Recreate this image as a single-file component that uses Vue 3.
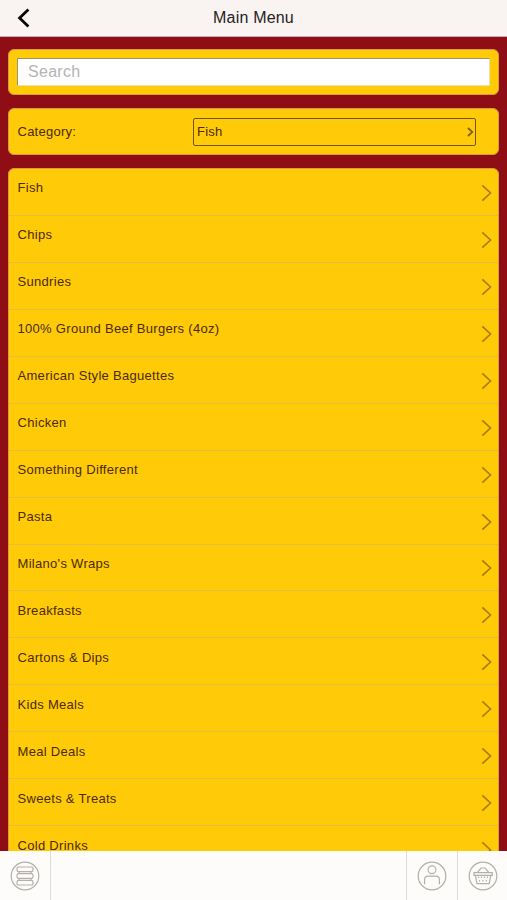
<script setup>
const items = [
  'Fish', 'Chips', 'Sundries', '100% Ground Beef Burgers (4oz)', 'American Style Baguettes',
  'Chicken', 'Something Different', 'Pasta', "Milano's Wraps", 'Breakfasts', 'Cartons & Dips',
  'Kids Meals', 'Meal Deals', 'Sweets & Treats', 'Cold Drinks'
]
</script>

<template>
  <div class="screen">
    <header class="header">
      <svg class="back" width="14" height="20" viewBox="0 0 14 20"><path d="M12.4 1.5 3.6 10l8.8 8.5" /></svg>
      <h1 class="title">Main Menu</h1>
    </header>

    <main class="content">
      <section class="card search-card">
        <input class="search" type="text" placeholder="Search" />
      </section>

      <section class="card category-card">
        <span class="category-label">Category:</span>
        <div class="select">
          <span>Fish</span>
          <svg width="7" height="10" viewBox="0 0 7 10"><path d="M1 1l4.3 4L1 9" /></svg>
        </div>
      </section>

      <ul class="card list">
        <li v-for="item in items" :key="item" class="row">
          <span class="name">{{ item }}</span>
          <svg class="chevron" width="11" height="18" viewBox="0 0 11 18"><path d="M1.3 1.3 9.5 9l-8.2 7.7" /></svg>
        </li>
      </ul>
    </main>

    <footer class="footer">
      <div class="tab tab-menu">
        <svg width="30" height="30" viewBox="0 0 30 30">
          <circle cx="15" cy="15" r="13.8" />
          <rect x="7" y="6" width="16" height="4.6" rx="1.6" />
          <rect x="7" y="12.7" width="16" height="4.6" rx="1.6" />
          <rect x="7" y="19.4" width="16" height="4.6" rx="1.6" />
          <path d="M9 10.6v2.1M21 10.6v2.1M9 17.3v2.1M21 17.3v2.1" />
        </svg>
      </div>
      <div class="tab tab-user">
        <svg width="30" height="30" viewBox="0 0 30 30">
          <circle cx="15" cy="15" r="13.8" />
          <circle cx="15" cy="8.7" r="3.9" />
          <path d="M7.6 23.3v-4.5q0-3.6 3.6-3.6h7.6q3.6 0 3.6 3.6v4.5" />
        </svg>
      </div>
      <div class="tab tab-basket">
        <svg width="30" height="30" viewBox="0 0 30 30">
          <circle cx="15" cy="15" r="13.8" />
          <path d="M6 11.6h18.2v2.7H6zM7.4 14.3l1.6 8.3h12.2l1.6-8.3M9.3 11.6 13 7h4.2l3.7 4.6" />
          <path class="weave" d="M10.5 15.5v2M13.5 15.5v2M16.5 15.5v2M19.5 15.5v2M11.5 19v2M14.9 19v2M18.4 19v2" />
        </svg>
      </div>
    </footer>
  </div>
</template>

<style>
body {
  margin: 0;
  overflow: hidden;
}
</style>

<style scoped>
.screen {
  display: flex;
  flex-direction: column;
  width: 100%;
  height: 900px;
  overflow: hidden;
  background: #8f0e15;
  color: #4b2b08;
  font-family: "Liberation Sans", Arial, sans-serif;
  font-size: 13px;
}
svg {
  display: block;
  flex: none;
  fill: none;
}
.header {
  display: grid;
  grid-template-columns: 60px 1fr 60px;
  align-items: center;
  box-sizing: border-box;
  flex: none;
  height: 37px;
  padding-bottom: 1px;
  background: #f9f3f2;
  border-bottom: 1px solid #c9b0b0;
}
.back {
  margin-left: 16px;
  stroke: #080808;
  stroke-width: 2.8;
}
.title {
  margin: 0;
  color: #262222;
  font-size: 16px;
  font-weight: 400;
  line-height: 20px;
  letter-spacing: 0.2px;
  text-align: center;
}
.content {
  flex: 1;
  min-height: 0;
  padding: 12px 8px 0;
  overflow: hidden;
}
.card {
  box-sizing: border-box;
  margin: 0 0 13px;
  background: #ffca08;
  border: 1px solid #d99a45;
  border-radius: 6px;
}
.search-card {
  height: 46px;
  padding: 8px;
}
.search {
  display: block;
  box-sizing: border-box;
  width: 100%;
  height: 28px;
  padding: 0 10px;
  background: #fff;
  border: 1px solid;
  border-color: #a09463 #eee1a8 #eee1a8 #a09463;
  border-radius: 0;
  font-family: inherit;
  font-size: 16px;
  letter-spacing: 0.3px;
  outline: none;
}
.search::placeholder {
  color: #b4b4b4;
  opacity: 1;
}
.category-card {
  display: flex;
  align-items: center;
  height: 47px;
  padding: 0 22px 0 8.5px;
}
.category-label {
  width: 175.5px;
  letter-spacing: 0.25px;
}
.select {
  display: flex;
  flex: 1;
  align-items: center;
  justify-content: space-between;
  box-sizing: border-box;
  height: 28px;
  padding: 0 1px 0 3px;
  border: 1px solid #705515;
  border-radius: 2px;
  letter-spacing: 0.2px;
}
.select svg {
  stroke: #80620d;
  stroke-width: 1.8;
}
.list {
  padding: 0;
  list-style: none;
}
.row {
  display: flex;
  justify-content: space-between;
  box-sizing: border-box;
  height: 46.94px;
  padding: 10.4px 6px 0 8.5px;
  border-bottom: 1px solid #e4bd3e;
}
.name {
  line-height: 17px;
  letter-spacing: 0.3px;
}
.chevron {
  margin-top: 4.6px;
  stroke: #ad7c08;
  stroke-width: 1.7;
}
.footer {
  display: flex;
  flex: none;
  height: 49px;
  background: #fefcfa;
}
.tab {
  box-sizing: border-box;
  width: 50px;
  padding: 10px 0 0 10px;
}
.tab svg {
  stroke: #b3b0aa;
  stroke-width: 1.2;
}
.tab .weave {
  stroke-dasharray: 1.4 0.6;
}
.tab-menu {
  width: 51px;
  border-right: 1px solid #dedbd7;
}
.tab-user {
  width: 51px;
  margin-left: auto;
  border-left: 1px solid #dedbd7;
}
.tab-basket {
  border-left: 1px solid #dedbd7;
}
</style>
